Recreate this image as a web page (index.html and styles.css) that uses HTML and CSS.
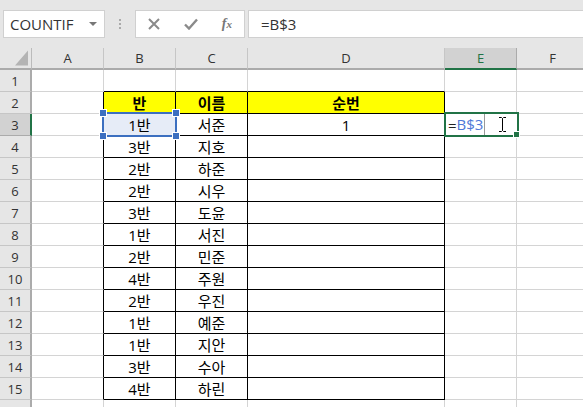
FILE: index.html
```html
<!DOCTYPE html>
<html lang="ko">
<head>
<meta charset="utf-8">
<title>Excel</title>
<link rel="stylesheet" href="styles.css">
</head>
<body>
<div class="app">
  <div class="fbar">
    <div class="namebox"><span>COUNTIF</span><i class="caret"></i></div>
    <div class="grip"><i></i><i></i><i></i></div>
    <div class="btns">
      <svg class="ico" viewBox="0 0 12 12"><path d="M1 1L11 11M11 1L1 11" stroke="#8a8a8a" stroke-width="2" fill="none"/></svg>
      <svg class="ico" viewBox="0 0 14 12"><path d="M1 6.5L5 10.5L13 1.5" stroke="#8a8a8a" stroke-width="2.4" fill="none"/></svg>
      <span class="fx">f<small>x</small></span>
    </div>
    <div class="formula">=B$3</div>
  </div>
  <div class="sheet">
    <div class="row hd">
      <div class="corner"><svg viewBox="0 0 14 16"><path d="M14 0V16H0Z" fill="#b4b4b4"/></svg></div>
      <div class="ch">A</div><div class="ch">B</div><div class="ch">C</div><div class="ch">D</div><div class="ch on">E</div><div class="ch">F</div>
    </div>
    <div class="row"><div class="rh">1</div><div class="c"></div><div class="c bb"></div><div class="c bb"></div><div class="c bb"></div><div class="c"></div><div class="c"></div></div>
    <div class="row"><div class="rh">2</div><div class="c br"></div><div class="c t">반</div><div class="c t">이름</div><div class="c t">순번</div><div class="c"></div><div class="c"></div></div>
    <div class="row"><div class="rh on">3</div><div class="c br"></div><div class="c k sel">1반</div><div class="c k">서준</div><div class="c k">1</div><div class="c"></div><div class="c"></div></div>
    <div class="row"><div class="rh">4</div><div class="c br"></div><div class="c k">3반</div><div class="c k">지호</div><div class="c k"></div><div class="c"></div><div class="c"></div></div>
    <div class="row"><div class="rh">5</div><div class="c br"></div><div class="c k">2반</div><div class="c k">하준</div><div class="c k"></div><div class="c"></div><div class="c"></div></div>
    <div class="row"><div class="rh">6</div><div class="c br"></div><div class="c k">2반</div><div class="c k">시우</div><div class="c k"></div><div class="c"></div><div class="c"></div></div>
    <div class="row"><div class="rh">7</div><div class="c br"></div><div class="c k">3반</div><div class="c k">도윤</div><div class="c k"></div><div class="c"></div><div class="c"></div></div>
    <div class="row"><div class="rh">8</div><div class="c br"></div><div class="c k">1반</div><div class="c k">서진</div><div class="c k"></div><div class="c"></div><div class="c"></div></div>
    <div class="row"><div class="rh">9</div><div class="c br"></div><div class="c k">2반</div><div class="c k">민준</div><div class="c k"></div><div class="c"></div><div class="c"></div></div>
    <div class="row"><div class="rh">10</div><div class="c br"></div><div class="c k">4반</div><div class="c k">주원</div><div class="c k"></div><div class="c"></div><div class="c"></div></div>
    <div class="row"><div class="rh">11</div><div class="c br"></div><div class="c k">2반</div><div class="c k">우진</div><div class="c k"></div><div class="c"></div><div class="c"></div></div>
    <div class="row"><div class="rh">12</div><div class="c br"></div><div class="c k">1반</div><div class="c k">예준</div><div class="c k"></div><div class="c"></div><div class="c"></div></div>
    <div class="row"><div class="rh">13</div><div class="c br"></div><div class="c k">1반</div><div class="c k">지안</div><div class="c k"></div><div class="c"></div><div class="c"></div></div>
    <div class="row"><div class="rh">14</div><div class="c br"></div><div class="c k">3반</div><div class="c k">수아</div><div class="c k"></div><div class="c"></div><div class="c"></div></div>
    <div class="row"><div class="rh">15</div><div class="c br"></div><div class="c k">4반</div><div class="c k">하린</div><div class="c k"></div><div class="c"></div><div class="c"></div></div>
    <div class="row"><div class="rh"></div><div class="c"></div><div class="c"></div><div class="c"></div><div class="c"></div><div class="c"></div><div class="c"></div></div>

    <div class="range"><i class="h tl"></i><i class="h tr"></i><i class="h bl"></i><i class="h brh"></i></div>
    <div class="edit"><span class="eq">=</span><span class="ref">B$3</span><i class="fill"></i>
      <svg class="beam" viewBox="0 0 9 15"><path d="M1 .5H3.5L4.5 1.5L5.5 .5H8M4.5 1.5V13.5M1 14.5H3.5L4.5 13.5L5.5 14.5H8" stroke="#000" fill="none"/></svg>
    </div>
  </div>
</div>
</body>
</html>
```
FILE: styles.css
```css
* { box-sizing: border-box; }
html, body { margin: 0; padding: 0; }
body { width: 583px; height: 407px; overflow: hidden; background: #fff; font-family: "Open Sans", "Noto Sans CJK KR", sans-serif; }
.app { width: 583px; height: 407px; overflow: hidden; display: flex; flex-direction: column; }

.fbar { height: 48px; flex: none; background: #e6e6e6; display: flex; align-items: flex-start; padding: 10px 0 0 3px; }
.namebox { width: 102px; height: 28px; background: #fff; border: 1px solid #d0d0d0; display: flex; align-items: center; justify-content: space-between; padding: 0 7px 0 6px; font-size: 15px; color: #333; }
.caret { width: 0; height: 0; border-left: 4px solid transparent; border-right: 4px solid transparent; border-top: 4px solid #777; }
.grip { width: 30px; height: 28px; display: flex; flex-direction: column; align-items: center; justify-content: center; gap: 2px; }
.grip i { width: 2px; height: 2px; background: #aaa; }
.btns { width: 110px; height: 28px; background: #fff; border: 1px solid #d0d0d0; display: flex; align-items: center; justify-content: space-between; padding: 0 12px; }
.ico { width: 12px; height: 12px; }
.ico + .ico { width: 14px; }
.fx { font-family: "Liberation Serif", serif; font-style: italic; font-weight: 700; font-size: 14px; color: #777; line-height: 1; }
.fx small { font-size: 11px; }
.formula { flex: 1; margin-left: 3px; height: 28px; background: #fff; border: 1px solid #d0d0d0; border-right: 0; display: flex; align-items: center; padding-left: 12px; font-size: 15px; color: #333; }

.sheet { position: relative; flex: 1; }
.row { display: grid; grid-template-columns: 32px 72px 72px 72px 197px 72px 72px; height: 22px; }
.corner { background: #e6e6e6; border-right: 1px solid #bbb; border-bottom: 2px solid #ababab; padding: 2px 3px 0 15px; }
.corner svg { display: block; width: 13px; height: 16px; }
.ch { background: #e6e6e6; border-right: 1px solid #c6c6c6; border-bottom: 2px solid #ababab; display: flex; align-items: center; justify-content: center; font-size: 13px; color: #333; }
.ch.on { background: #d2d2d2; color: #217346; border-bottom-color: #217346; border-right-color: #ababab; }
.rh { background: #e6e6e6; border-right: 2px solid #ababab; border-bottom: 1px solid #c6c6c6; display: flex; align-items: center; justify-content: center; font-size: 13px; color: #333; }
.rh.on { background: #d2d2d2; border-right-color: #217346; border-bottom-color: #ababab; }
.c { border-right: 1px solid #d4d4d4; border-bottom: 1px solid #d4d4d4; display: flex; align-items: center; justify-content: center; font-size: 15px; color: #000; }
.bb { border-bottom-color: #000; }
.br { border-right-color: #000; }
.t { background: #ffff00; border-right-color: #000; border-bottom-color: #000; font-weight: 700; }
.k { border-right-color: #000; border-bottom-color: #000; }
.sel { background: #e6ecf7; }

.range { position: absolute; left: 102px; top: 64px; width: 75px; height: 25px; border: 2px solid #3c6fc0; }
.h { position: absolute; width: 6px; height: 6px; background: #3c6fc0; outline: 1px solid #fff; }
.tl { left: -4px; top: -4px; }
.tr { right: -4px; top: -4px; }
.bl { left: -4px; bottom: -4px; }
.brh { right: -4px; bottom: -4px; }

.edit { position: absolute; left: 444px; top: 64px; width: 75px; height: 25px; border: 2px solid #217346; background: #fff; display: flex; align-items: center; padding-left: 2px; font-size: 15px; }
.eq { color: #222; }
.ref { color: #4f79d8; padding-right: 1px; border-right: 1px solid #999; height: 21px; line-height: 21px; }
.fill { position: absolute; right: -2px; bottom: -2px; width: 5px; height: 5px; background: #217346; outline: 1px solid #fff; }
.beam { width: 9px; height: 15px; margin-left: 13px; }
```
